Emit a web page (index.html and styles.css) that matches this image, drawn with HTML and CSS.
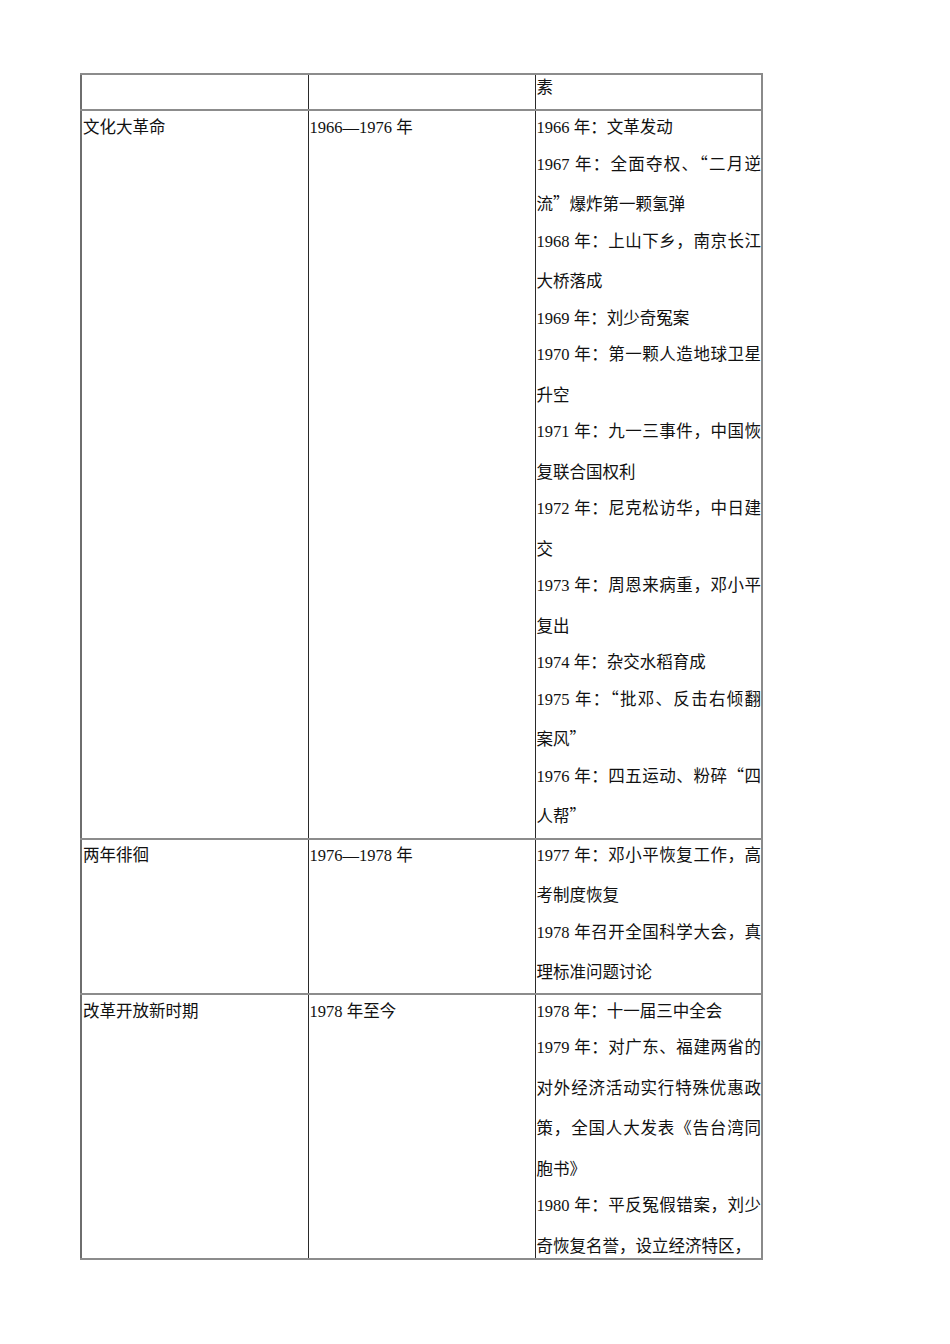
FILE: index.html
```html
<!DOCTYPE html>
<html lang="zh-CN">
<head>
<meta charset="utf-8">
<title>历史阶段表</title>
<link rel="stylesheet" href="styles.css">
</head>
<body>
<div class="page">
<table class="tbl">
  <colgroup><col class="c1"><col class="c2"><col class="c3"></colgroup>
  <tr class="r-head">
    <td></td>
    <td></td>
    <td><div class="cell"><p>素</p></div></td>
  </tr>
  <tr class="r-body">
    <td><div class="cell"><p>文化大革命</p></div></td>
    <td><div class="cell"><p>1966—1976 年</p></div></td>
    <td><div class="cell">
      <p>1966 年：文革发动</p>
      <p>1967 年：全面夺权、<span class="q">“</span>二月逆流<span class="q">”</span>爆炸第一颗氢弹</p>
      <p>1968 年：上山下乡，南京长江大桥落成</p>
      <p>1969 年：刘少奇冤案</p>
      <p>1970 年：第一颗人造地球卫星升空</p>
      <p>1971 年：九一三事件，中国恢复联合国权利</p>
      <p>1972 年：尼克松访华，中日建交</p>
      <p>1973 年：周恩来病重，邓小平复出</p>
      <p>1974 年：杂交水稻育成</p>
      <p>1975 年：<span class="q">“</span>批邓、反击右倾翻案风<span class="q">”</span></p>
      <p>1976 年：四五运动、粉碎<span class="q">“</span>四人帮<span class="q">”</span></p>
    </div></td>
  </tr>
  <tr class="r-body r-mid">
    <td><div class="cell"><p>两年徘徊</p></div></td>
    <td><div class="cell"><p>1976—1978 年</p></div></td>
    <td><div class="cell">
      <p>1977 年：邓小平恢复工作，高考制度恢复</p>
      <p>1978 年召开全国科学大会，真理标准问题讨论</p>
    </div></td>
  </tr>
  <tr class="r-last">
    <td><div class="cell"><p>改革开放新时期</p></div></td>
    <td><div class="cell"><p>1978 年至今</p></div></td>
    <td><div class="cell">
      <p>1978 年：十一届三中全会</p>
      <p>1979 年：对广东、福建两省的对外经济活动实行特殊优惠政策，全国人大发表《告台湾同胞书》</p>
      <p class="cut">1980 年：平反冤假错案，刘少奇恢复名誉，设立经济特区，</p>
    </div></td>
  </tr>
</table>
</div>
</body>
</html>
```

FILE: styles.css
```css
html, body {
  margin: 0;
  padding: 0;
  background: #ffffff;
}

body {
  width: 950px;
  min-height: 1344px;
  font-family: "Liberation Serif", "Noto Sans CJK SC", serif;
  font-size: 16.5px;
  color: #111111;
}

.page {
  padding: 73px 0 0 80px;
}

.tbl {
  border-collapse: collapse;
  table-layout: fixed;
  width: 683px;
  border-top: 2px solid #6e6e6e;
  border-bottom: 2px solid #6e6e6e;
  border-left: 2px solid #6e6e6e;
  border-right: 2px solid #8a8a8a;
}

.c1 { width: 227px; }
.c2 { width: 227px; }
.c3 { width: 227px; }

.tbl td {
  vertical-align: top;
  padding: 0 0 0 1px;
  border-left: 1px solid #2a2a2a;
  border-right: 1px solid #2a2a2a;
  border-top: 2px solid #8c8c8c;
  border-bottom: 2px solid #8c8c8c;
  overflow: hidden;
}

.tbl td:first-child {
  border-left: 2px solid #6e6e6e;
}

.tbl td:last-child {
  border-right: 2px solid #8a8a8a;
}

.r-head td {
  height: 34px;
}

.cell {
  margin-top: -3px;
}

.r-head .cell {
  margin-top: -7px;
}

.r-mid .cell {
  margin-top: -4px;
  margin-bottom: -1px;
}

.cell p {
  margin: 0;
  line-height: 40.5px;
  text-align: justify;
}

.cell p + p {
  margin-top: -4px;
}

.r-head .cell p {
  line-height: 40px;
}

.cell p.cut {
  margin-bottom: -9px;
}

.q {
  font-family: "Noto Sans CJK SC", sans-serif;
  line-height: 0;
}
```
